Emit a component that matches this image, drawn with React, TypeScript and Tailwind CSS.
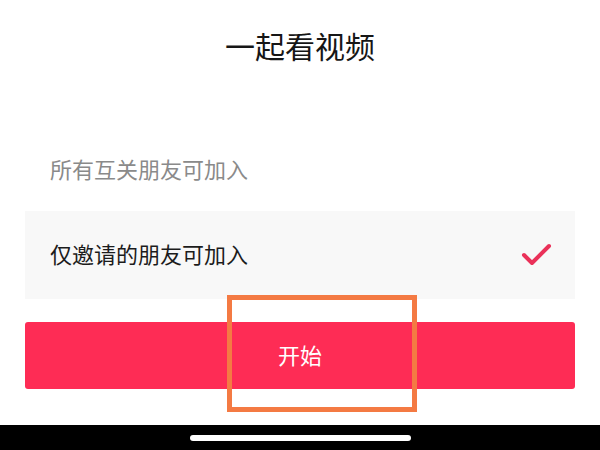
export default function App() {
  return (
    <div
      className="relative w-[600px] h-[450px] bg-white flex flex-col overflow-hidden"
      style={{ fontFamily: '"Noto Sans CJK SC", "Noto Sans", sans-serif' }}
    >
      <div className="h-[425px] flex flex-col px-[25px]">
        <h1 className="pt-[27px] text-center text-[30px] leading-[36px] text-[#161616] font-normal">
          一起看视频
        </h1>

        <div className="mt-[66px] h-[82px] flex items-center pl-[25px] pb-[4px] text-[22px] text-[#8a8a8a]">
          所有互关朋友可加入
        </div>

        <div className="h-[88px] flex items-center justify-between pl-[25px] pr-[22px] bg-[#f8f8f8] text-[22px] text-[#1c1c1c]">
          <span className="pb-[4px]">仅邀请的朋友可加入</span>
          <svg width="32" height="26" viewBox="0 0 32 26" fill="none">
            <polyline
              points="3,13 11,21 28,4"
              stroke="#ea3159"
              strokeWidth="4"
              strokeLinecap="round"
              strokeLinejoin="round"
            />
          </svg>
        </div>

        <button className="mt-[23px] h-[67px] w-full rounded-[3px] bg-[#fe2c55] text-white text-[22px] pb-[2px]">
          开始
        </button>
      </div>

      <div className="h-[25px] bg-black flex justify-center pt-[10px]">
        <div className="w-[221px] h-[6px] rounded-full bg-white" />
      </div>

      {/* annotation box */}
      <div className="absolute left-[227px] top-[295px] w-[190px] h-[117px] border-[5px] border-[#f47a43]" />
    </div>
  );
}
